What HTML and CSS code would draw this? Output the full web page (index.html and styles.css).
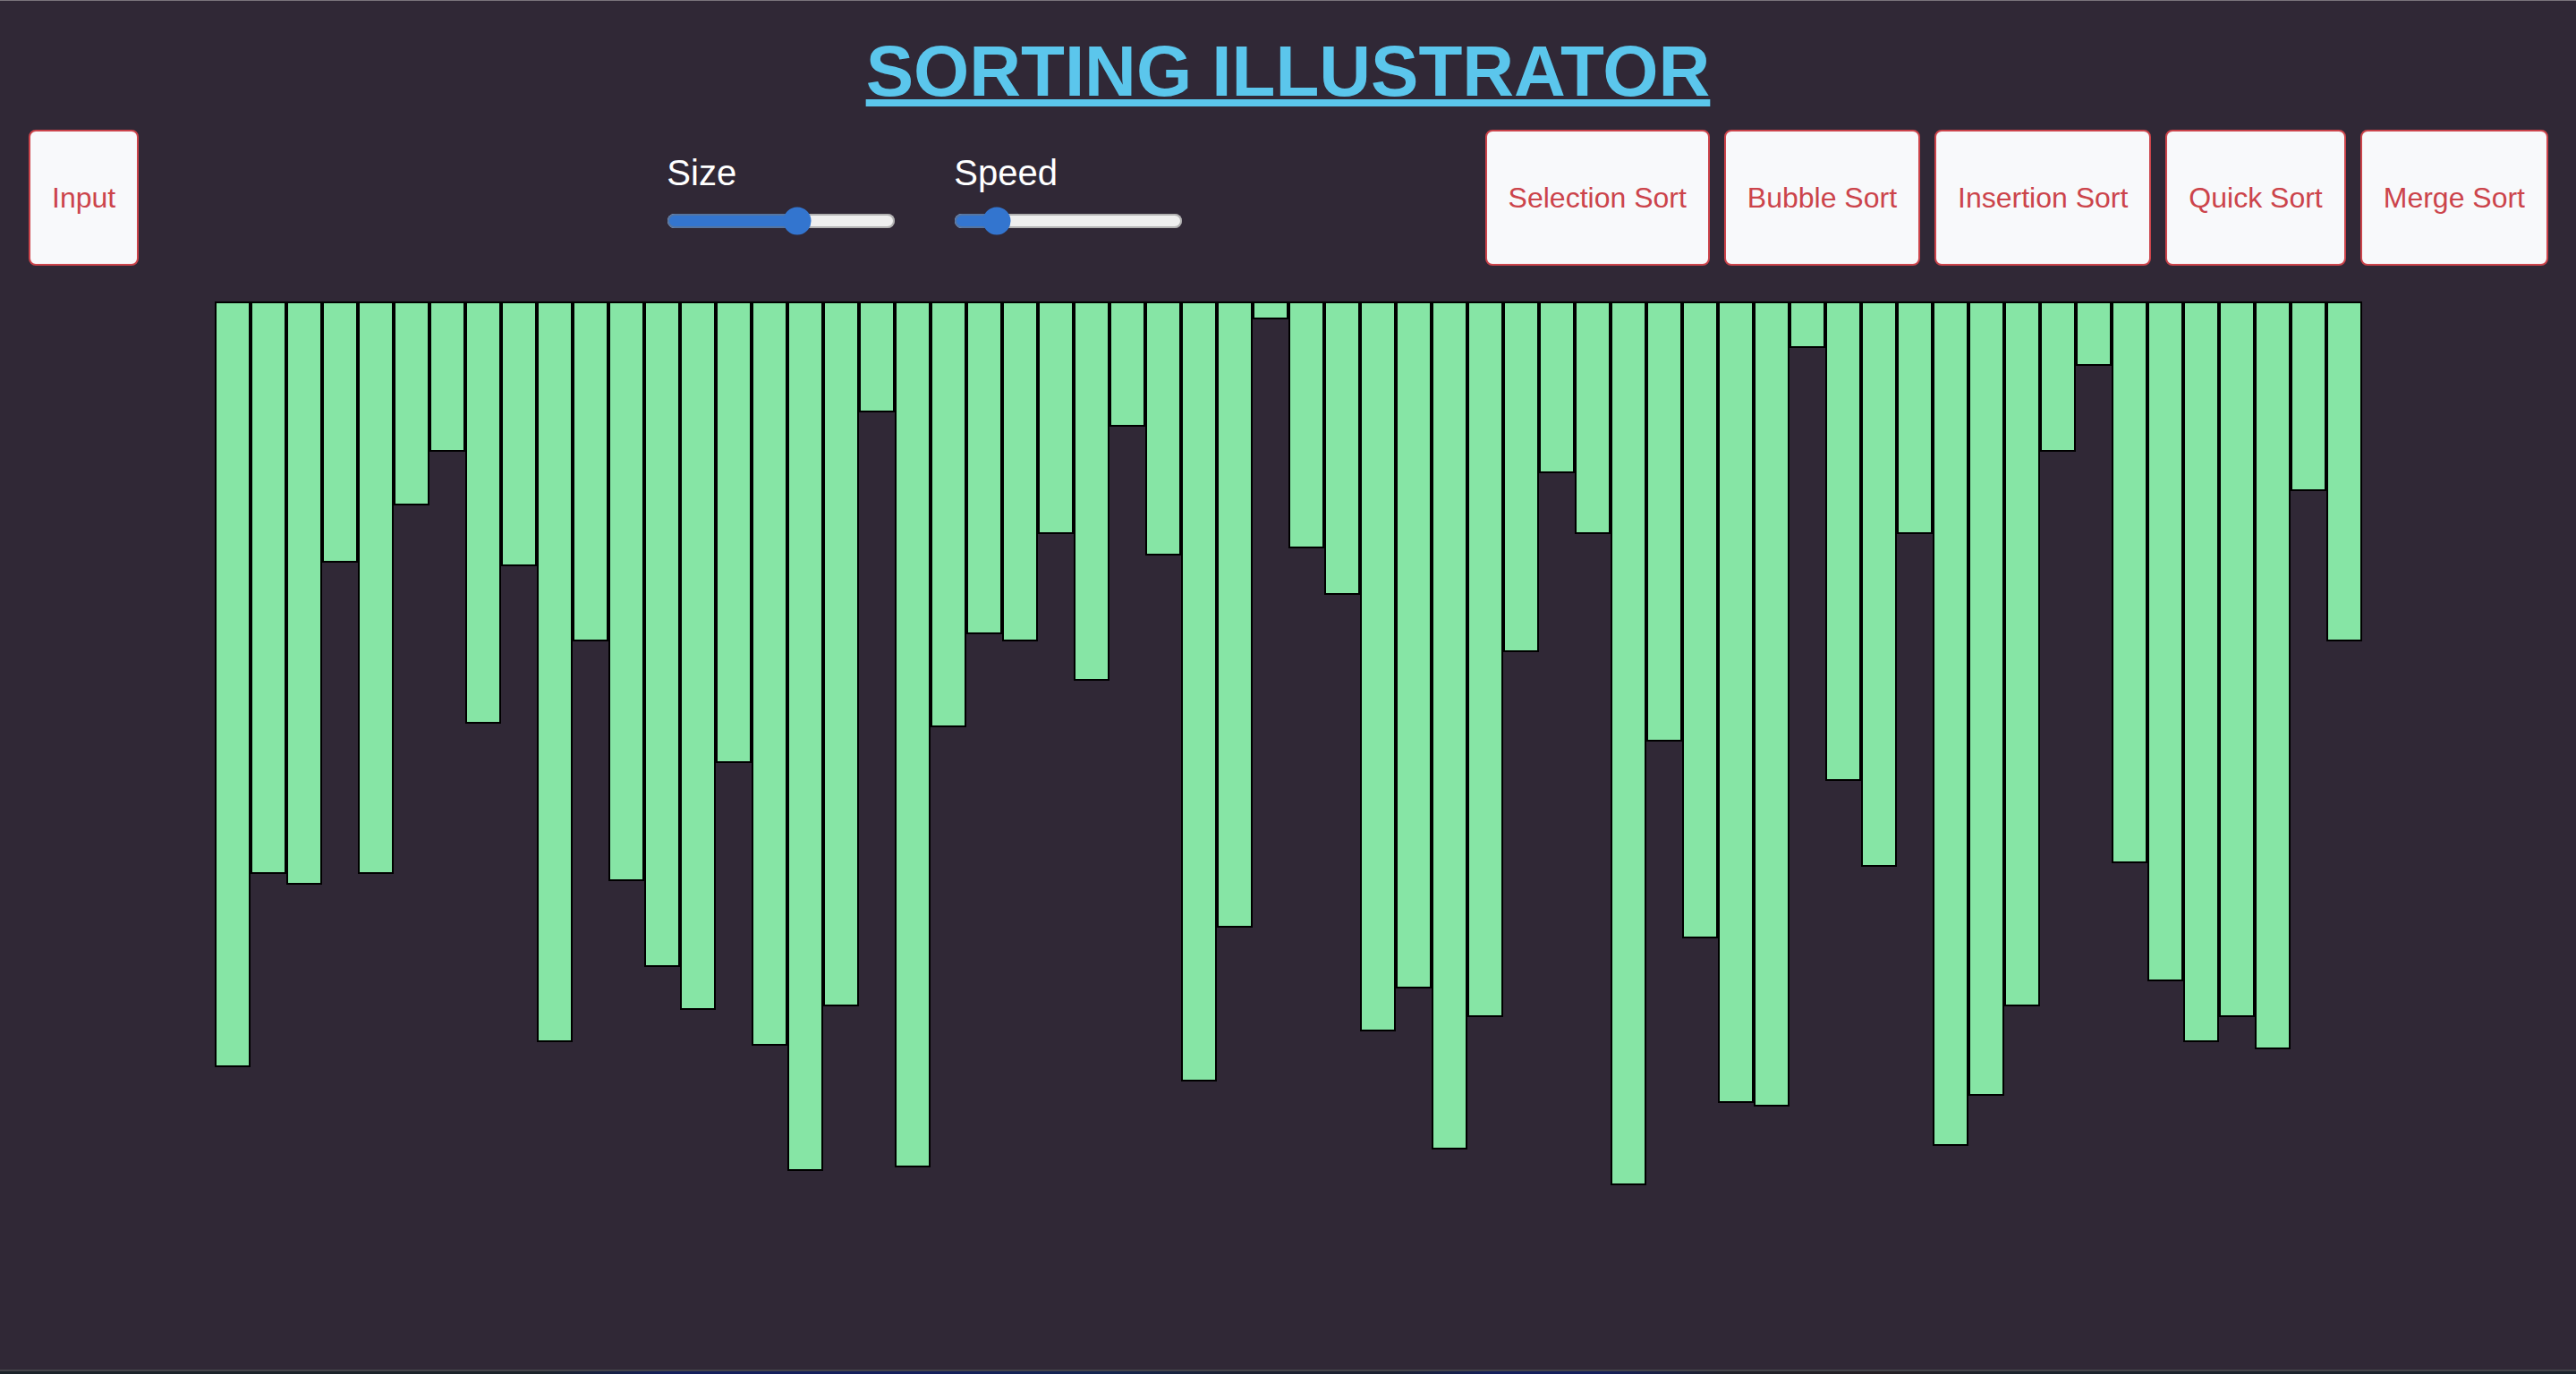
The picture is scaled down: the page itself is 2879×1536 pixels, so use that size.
FILE: index.html
```
<!DOCTYPE html>
<html lang="en">
<head>
<meta charset="utf-8">
<title>Sorting Illustrator</title>
<link rel="stylesheet" href="styles.css">
</head>
<body>
<header class="header">
  <h1 class="title">SORTING ILLUSTRATOR</h1>
</header>
<nav class="toolbar">
  <div class="group group-start"><button class="btn" type="button">Input</button></div>
  <div class="group group-sliders">
    <div class="field">
      <label class="label" for="size">Size</label>
      <input class="slider" id="size" type="range" min="0" max="100" value="58">
    </div>
    <div class="field">
      <label class="label" for="speed">Speed</label>
      <input class="slider" id="speed" type="range" min="0" max="100" value="14">
    </div>
  </div>
  <div class="group group-end">
    <button class="btn" type="button">Selection Sort</button>
    <button class="btn" type="button">Bubble Sort</button>
    <button class="btn" type="button">Insertion Sort</button>
    <button class="btn" type="button">Quick Sort</button>
    <button class="btn" type="button">Merge Sort</button>
  </div>
</nav>
<main class="bars" id="bars"></main>
<footer class="edge"></footer>
<script src="bars.js"></script>
</body>
</html>
```
FILE: styles.css
```
* {
  box-sizing: border-box;
}

body {
  margin: 0;
  min-height: 100vh;
  display: flex;
  flex-direction: column;
  border-top: 1px solid #7a757c;
  background: #302836;
  font-family: "Liberation Sans", Arial, sans-serif;
}

.header {
  padding-top: 31px;
  text-align: center;
}

.title {
  margin: 0;
  font-size: 80px;
  line-height: 96px;
  color: #5bc6ec;
  text-decoration: underline;
  text-decoration-thickness: 8px;
  text-underline-offset: 4px;
  text-decoration-skip-ink: none;
}

/* The empty second and fourth columns share the free width 7:4. */
.toolbar {
  display: grid;
  grid-template-columns: auto 7fr auto 4fr auto;
  padding: 17px 31px 0 32px;
}

.group {
  display: flex;
  gap: 16px;
}

.group-sliders {
  grid-column: 3;
  gap: 65px;
}

.group-end {
  grid-column: 5;
}

.btn {
  height: 152px;
  padding: 0 24px;
  border: 2px solid #cc444b;
  border-radius: 8px;
  background: #f8f9fb;
  color: #cc444b;
  font: 32px/48px "Liberation Sans", Arial, sans-serif;
  white-space: nowrap;
}

.field {
  display: flex;
  flex-direction: column;
  padding-top: 16px;
}

.label {
  font-size: 40px;
  line-height: 64px;
  color: #fff;
}

.slider {
  zoom: 2;
  width: 128px;
  height: 16px;
  margin: 3px 0 0;
  accent-color: #3375cf;
}

.bars {
  flex: 1;
  display: flex;
  justify-content: center;
  align-items: flex-start;
  padding-top: 40px;
}

.bar {
  width: 40px;
  border: 2px solid #000;
  background: #86e5a5;
}

.edge {
  height: 5px;
  border-top: 2px solid #444349;
  background: linear-gradient(90deg, #1b2229 0 21%, #141f5c 26% 36%, #14254f 43%, #1b2030 48% 54%, #141f5c 58% 62%, #1f2028 67%, #241f24 73%, #1b222b 78%);
}
```
FILE: bars.js
```
const values = [
  214, 160, 163, 73, 160, 57, 42, 118, 74, 207, 95, 162, 186, 198, 129,
  208, 243, 197, 31, 242, 119, 93, 95, 65, 106, 35, 71, 218, 175, 5,
  69, 82, 204, 192, 237, 200, 98, 48, 65, 247, 123, 178, 224, 225, 13,
  134, 158, 65, 236, 222, 197, 42, 18, 157, 190, 207, 200, 209, 53, 95
];
const chart = document.getElementById("bars");

for (const value of values) {
  const bar = document.createElement("div");
  bar.className = "bar";
  bar.style.height = `${value * 4}px`;
  chart.append(bar);
}
```
